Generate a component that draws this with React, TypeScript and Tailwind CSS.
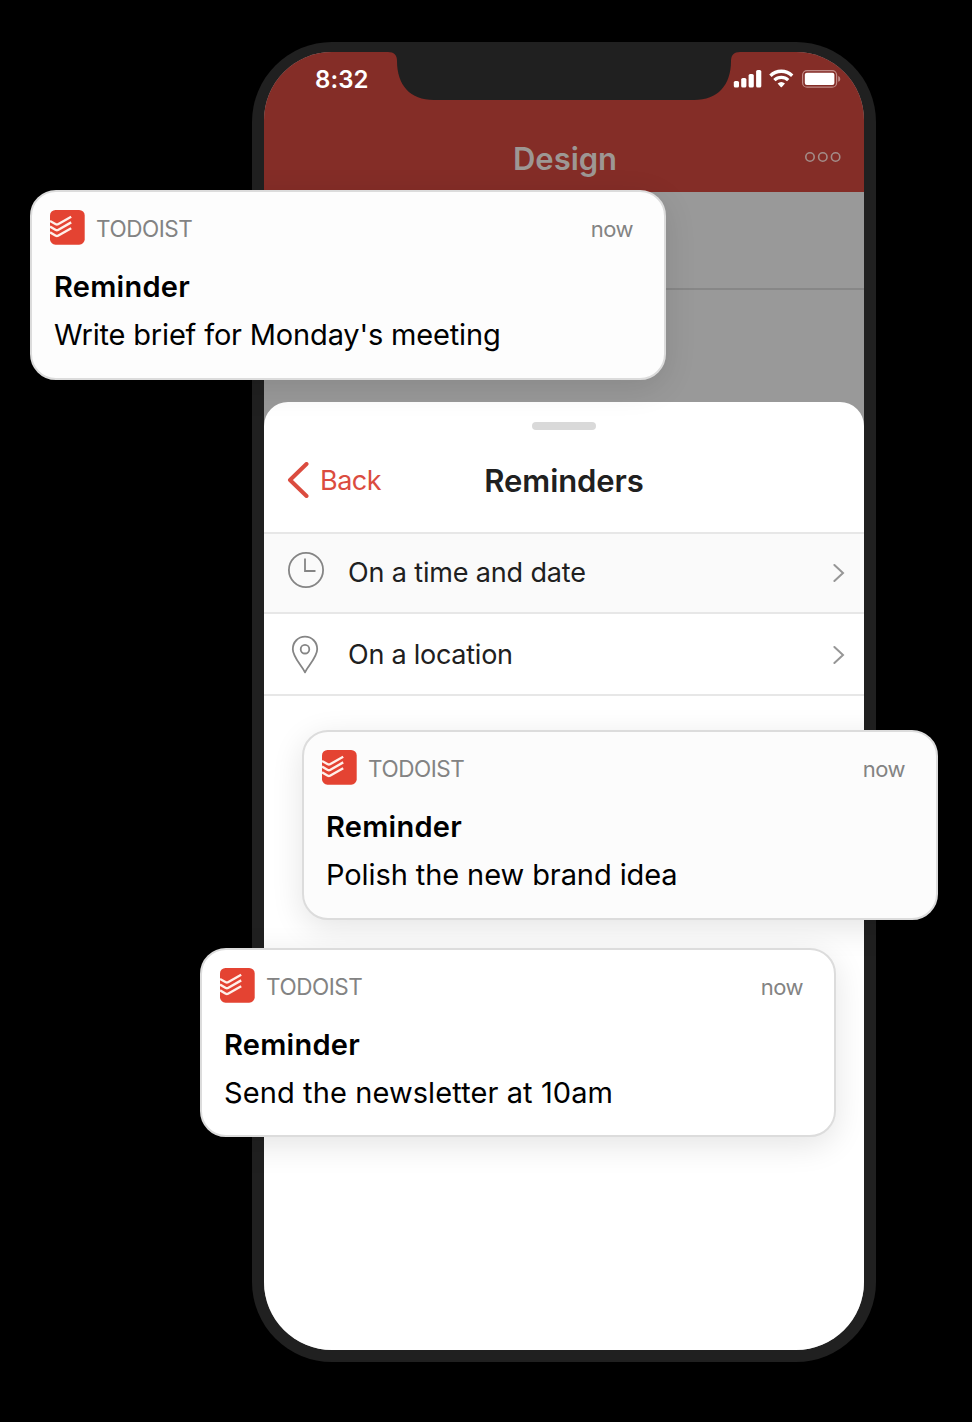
import React from "react";

function TodoistIcon() {
  return (
    <svg width="35" height="35" viewBox="0 0 35 35" className="shrink-0">
      <rect width="34.7" height="34.7" rx="5.5" fill="#e44332" />
      <g fill="none" stroke="#fff0ea" strokeWidth="2.4" strokeLinejoin="round">
        <path d="M0 11 L5.8 14.2 C6.6 14.6 7.2 14.6 8 14.2 L21.2 6.8" />
        <path d="M0 16.6 L5.8 20 C6.6 20.4 7.2 20.4 8 20 L21.2 12.4" />
        <path d="M0 22.4 L5.8 25.8 C6.6 26.2 7.2 26.2 8 25.8 L21.2 18.2" />
      </g>
    </svg>
  );
}

function Notification({ message, className, tracking }: { message: string; className: string; tracking: string }) {
  return (
    <article
      className={`absolute w-[636px] rounded-[26px] border-2 border-[#dcdcdc] pl-[18px] pr-[31px] pt-[18px] shadow-[0_8px_32px_rgba(0,0,0,0.11)] ${className}`}
    >
      <div className="flex h-[35px] items-center justify-between text-[22.5px] text-[#838383]">
        <div className="flex items-center">
          <TodoistIcon />
          <span className="ml-[11px] pt-[1px] leading-[35px] tracking-[-0.45px]">TODOIST</span>
        </div>
        <span className="pt-[4px] text-[22px] leading-[35px] tracking-[-0.5px]">now</span>
      </div>
      <div className="mt-[18px] whitespace-nowrap pl-[4px] text-[29px] leading-[48px] text-black">
        <h2 className="font-semibold tracking-[0.25px]">Reminder</h2>
        <p className={tracking}>{message}</p>
      </div>
    </article>
  );
}

function StatusIcons() {
  return (
    <svg width="108" height="22" viewBox="0 0 108 22" fill="#fff">
      <rect x="0.8" y="13" width="5.2" height="6.5" rx="1.6" />
      <rect x="8.2" y="10" width="5.2" height="9.5" rx="1.6" />
      <rect x="15.6" y="6" width="5.2" height="13.5" rx="1.6" />
      <rect x="23.1" y="2" width="5.2" height="17.5" rx="1.6" />
      <g fill="none" stroke="#fff" strokeWidth="3.3">
        <path d="M37.4 7.7 A15.6 15.6 0 0 1 59.2 7.7" />
        <path d="M41.4 12.1 A10 10 0 0 1 55.2 12.1" />
      </g>
      <path d="M44.6 15.5 Q48.3 12.3 52 15.5 L48.9 19 Q48.3 19.7 47.7 19Z" />
      <rect x="69.6" y="2.6" width="34" height="16.6" rx="4.5" fill="none" stroke="#c08a86" strokeWidth="1.2" />
      <rect x="71.8" y="4.7" width="29.6" height="12.4" rx="2" />
      <path d="M105.2 8 Q107.3 8.6 107.3 10.9 T105.2 13.8Z" fill="#c08a86" />
    </svg>
  );
}

function Chevron() {
  return (
    <svg width="12" height="20" viewBox="0 0 12 20" fill="none" stroke="#969696" strokeWidth="2" strokeLinecap="round">
      <path d="M1.4 2 L10 10 L1.4 18" />
    </svg>
  );
}

export default function App() {
  return (
    <main className="relative flex h-[1422px] w-[972px] items-start overflow-hidden bg-black pl-[252px] pt-[42px] font-['Inter',sans-serif]">
      <div className="h-[1320px] w-[624px] rounded-[80px] bg-[#202020] px-[12px] pb-[12px] pt-[10px]">
        <div className="relative flex h-full flex-col overflow-hidden rounded-[68px] bg-[#999999]">
          <svg className="absolute left-[124px] top-0" width="352" height="49" viewBox="0 0 352 49" fill="#202020">
            <path d="M0 0 C6 0 9 3 9 9 C9 33 22 48 46 48 H306 C330 48 343 33 343 9 C343 3 346 0 352 0Z" />
          </svg>
          <header className="h-[140px] shrink-0 bg-[#842d27]">
            <div className="flex h-[54px] items-center justify-between pl-[51px] pr-[23px]">
              <span className="pt-[2px] text-[24px] font-semibold leading-[54px] tracking-[0.1px] text-white">8:32</span>
              <StatusIcons />
            </div>
            <div className="grid h-[86px] grid-cols-[1fr_auto_1fr] items-start pr-[22px] pt-[32px]">
              <span />
              <h1 className="pl-[24px] text-[31px] font-semibold leading-[42px] tracking-[-0.05px] text-[#9d9794]">Design</h1>
              <svg className="mt-[13px] justify-self-end" width="38" height="12" viewBox="0 0 38 12" fill="none" stroke="#a38c88" strokeWidth="1.6">
                <circle cx="6" cy="6" r="4.2" />
                <circle cx="18.8" cy="6" r="4.2" />
                <circle cx="31.6" cy="6" r="4.2" />
              </svg>
            </div>
          </header>
          <div className="h-[98px] shrink-0 border-b-2 border-[#878787]" />
          <div className="h-[112px] shrink-0" />
          <section className="flex-1 rounded-t-[24px] bg-white text-[#202020]">
            <div className="flex h-[28px] items-end justify-center">
              <div className="h-[8px] w-[64px] rounded-full bg-[#d9d9d9]" />
            </div>
            <div className="grid h-[102px] grid-cols-[1fr_auto_1fr] items-start pt-[30px]">
              <button className="flex items-center pl-[23px] text-[27px] leading-[40px] tracking-[-0.5px] text-[#db4c3f]">
                <svg className="mb-[1px]" width="23" height="36" viewBox="0 0 23 36" fill="none" stroke="#db4c3f" strokeWidth="4" strokeLinecap="round" strokeLinejoin="round">
                  <path d="M19.5 2 L3 18 L19.5 34" />
                </svg>
                <span className="ml-[10px] pt-[1px]">Back</span>
              </button>
              <h2 className="text-[31px] font-semibold leading-[42px] tracking-[-0.1px]">Reminders</h2>
              <span />
            </div>
            <div className="flex h-[82px] items-center border-y-2 border-[#e7e7e7] bg-[#fafafa] pl-[23px] pr-[19px]">
              <svg className="mb-[6px]" width="38" height="38" viewBox="0 0 38 38" fill="none" stroke="#858585" strokeWidth="1.8">
                <circle cx="19" cy="19" r="17.1" />
                <path d="M18 7.5 V20 H28.5" />
              </svg>
              <span className="ml-[23px] flex-1 text-[27px] leading-[40px] tracking-[-0.15px]">On a time and date</span>
              <Chevron />
            </div>
            <div className="flex h-[82px] items-center border-b-2 border-[#e7e7e7] pl-[23px] pr-[19px] pt-[1px]">
              <svg width="38" height="40" viewBox="0 0 38 40" fill="none" stroke="#858585" strokeWidth="1.8">
                <path d="M18 37.4 C15 31 5.8 22 5.8 14.2 C5.8 7 11.2 1.7 18 1.7 S30.2 7 30.2 14.2 C30.2 22 21 31 18 37.4Z" strokeLinejoin="round" />
                <circle cx="18" cy="14.2" r="4.3" />
              </svg>
              <span className="ml-[23px] flex-1 text-[27px] leading-[40px] tracking-[-0.25px]">On a location</span>
              <Chevron />
            </div>
          </section>
        </div>
      </div>
      <Notification message="Write brief for Monday's meeting" className="left-[30px] top-[190px] h-[190px] bg-[#fdfdfd]" tracking="tracking-[-0.17px]" />
      <Notification message="Polish the new brand idea" className="left-[302px] top-[730px] h-[190px] bg-[#fcfcfc]" tracking="tracking-[-0.09px]" />
      <Notification message="Send the newsletter at 10am" className="left-[200px] top-[948px] h-[189px] bg-white" tracking="tracking-[0.1px]" />
    </main>
  );
}
